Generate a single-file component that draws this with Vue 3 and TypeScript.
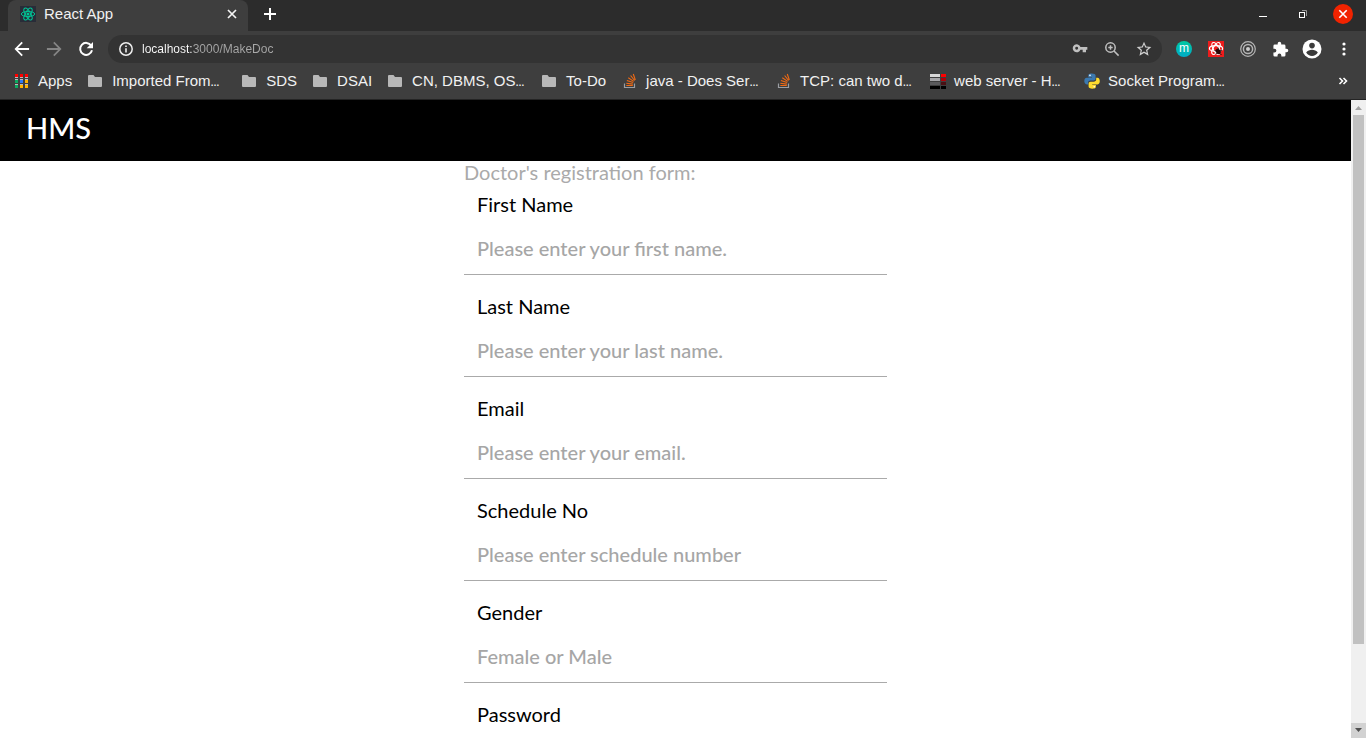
<script setup lang="ts">
import { ref } from 'vue'

interface Bookmark {
  label: string
  icon: 'apps' | 'folder' | 'stack' | 'host' | 'python'
  cut?: boolean
}

interface Field {
  id: string
  label: string
  placeholder: string
  type: string
}

const address = ref('localhost:3000/MakeDoc')

const bookmarks: Bookmark[] = [
  { label: 'Apps', icon: 'apps' },
  { label: 'Imported From', icon: 'folder', cut: true },
  { label: 'SDS', icon: 'folder' },
  { label: 'DSAI', icon: 'folder' },
  { label: 'CN, DBMS, OS', icon: 'folder', cut: true },
  { label: 'To-Do', icon: 'folder' },
  { label: 'java - Does Ser', icon: 'stack', cut: true },
  { label: 'TCP: can two d', icon: 'stack', cut: true },
  { label: 'web server - H', icon: 'host', cut: true },
  { label: 'Socket Program', icon: 'python', cut: true },
]

const appColors = ['#f00', '#f00', '#f00', '#0da960', '#2f7bf6', '#ffb300', '#0da960', '#ffb300', '#ffb300']
const hostRows = [
  ['#d8d8d8', '#f00'],
  ['#a5a5a8', '#b00008'],
  ['#5a5a5c', '#4a1014'],
  ['#000', '#000'],
]

const fields: Field[] = [
  { id: 'first-name', label: 'First Name', placeholder: 'Please enter your first name.', type: 'text' },
  { id: 'last-name', label: 'Last Name', placeholder: 'Please enter your last name.', type: 'text' },
  { id: 'email', label: 'Email', placeholder: 'Please enter your email.', type: 'email' },
  { id: 'schedule', label: 'Schedule No', placeholder: 'Please enter schedule number', type: 'text' },
  { id: 'gender', label: 'Gender', placeholder: 'Female or Male', type: 'text' },
  { id: 'password', label: 'Password', placeholder: 'Please enter your password.', type: 'password' },
]
</script>

<template>
  <div class="window">
    <div class="tabstrip">
      <div class="tab">
        <svg class="favicon" viewBox="0 0 16 16" width="16" height="16">
          <rect width="16" height="16" fill="#282c38" />
          <g fill="none" stroke="#00c596" stroke-width="1">
            <ellipse cx="8" cy="8" rx="6.7" ry="2.6" />
            <ellipse cx="8" cy="8" rx="6.7" ry="2.6" transform="rotate(60 8 8)" />
            <ellipse cx="8" cy="8" rx="6.7" ry="2.6" transform="rotate(120 8 8)" />
          </g>
          <circle cx="8" cy="8" r="1.5" fill="#00c596" />
        </svg>
        <span class="tab-title">React App</span>
        <button class="icon-btn tab-close" aria-label="Close tab">
          <svg viewBox="0 0 16 16" width="16" height="16"><path d="M4 4l8 8M12 4l-8 8" stroke="#f4f4f4" stroke-width="1.7" /></svg>
        </button>
      </div>
      <button class="icon-btn new-tab" aria-label="New tab">
        <svg viewBox="0 0 16 16" width="16" height="16"><path d="M8 2v12M2 8h12" stroke="#fff" stroke-width="2" /></svg>
      </button>
      <div class="window-controls">
        <button class="icon-btn" aria-label="Minimize">
          <svg viewBox="0 0 20 20" width="20" height="20"><path d="M6 12.5h8" stroke="#fff" /></svg>
        </button>
        <button class="icon-btn" aria-label="Restore">
          <svg viewBox="0 0 20 20" width="20" height="20" fill="none">
            <path d="M9 6.500h4.500V12" stroke="#999" />
            <rect x="6.500" y="8.500" width="5" height="5" stroke="#fff" />
          </svg>
        </button>
        <button class="icon-btn" aria-label="Close window">
          <svg viewBox="0 0 20 20" width="20" height="20">
            <circle cx="10" cy="10" r="10" fill="#f12300" />
            <path d="M6.300 6.300l7.400 7.400M13.700 6.300l-7.400 7.400" stroke="#fff" stroke-width="1.600" />
          </svg>
        </button>
      </div>
    </div>

    <div class="toolbar">
      <div class="nav">
        <button class="icon-btn" aria-label="Back">
          <svg viewBox="0 0 24 24" width="20" height="20"><path fill="#fff" d="M20.500 10.800H7.100l5.900-5.900L11.500 3.400 3 12l8.500 8.600 1.500-1.500-5.900-5.900h13.400z" /></svg>
        </button>
        <button class="icon-btn" aria-label="Forward">
          <svg viewBox="0 0 24 24" width="20" height="20"><path fill="#858585" d="M3.500 10.800h13.400L11 4.900l1.500-1.500L21 12l-8.500 8.600-1.500-1.500 5.900-5.900H3.500z" /></svg>
        </button>
        <button class="icon-btn" aria-label="Reload">
          <svg viewBox="0 0 20 20" width="20" height="20">
            <path d="M15.200 6.600A6 6 0 1 0 16 11.300" fill="none" stroke="#fff" stroke-width="2" />
            <path d="M17 2.900v6.300h-6.300z" fill="#fff" />
          </svg>
        </button>
      </div>
      <div class="omnibox">
        <svg viewBox="0 0 16 16" width="16" height="16">
          <circle cx="8" cy="8" r="6.200" fill="none" stroke="#eee" stroke-width="1.500" />
          <path d="M8 7.200v4.300M8 4.400v1.700" stroke="#eee" stroke-width="1.600" />
        </svg>
        <input v-model="address" class="address" type="text" aria-label="Address" spellcheck="false" />
        <button class="icon-btn" aria-label="Passwords">
          <svg viewBox="0 0 24 24" width="16" height="16"><path fill="#c0c0c0" d="M12.700 9A6 6 0 1 0 12.700 13H16v4h5v-4h2V9zM7 13.200a2.200 2.200 0 1 1 0-4.400 2.200 2.200 0 0 1 0 4.400z" /></svg>
        </button>
        <button class="icon-btn" aria-label="Zoom">
          <svg viewBox="0 0 16 16" width="16" height="16" fill="none" stroke="#c0c0c0" stroke-width="1.500">
            <circle cx="6.500" cy="6.500" r="4.700" />
            <path d="M10 10l4.600 4.600M4.300 6.500h4.400M6.500 4.300v4.400" />
          </svg>
        </button>
        <button class="icon-btn" aria-label="Bookmark this page">
          <svg viewBox="0 0 24 24" width="16" height="16"><path fill="#d0d0d0" d="M23 9l-7.900-.7L12 1 8.900 8.300 1 9l6 5.200L5.200 22l6.800-4.100 6.800 4.100-1.800-7.800zM12 15.600l-4.100 2.500 1.100-4.700L5.300 10.200l4.800-.4L12 5.400l1.900 4.400 4.800.4-3.700 3.200 1.100 4.700z" /></svg>
        </button>
      </div>
      <div class="extensions">
        <button class="icon-btn" aria-label="Extension m"><span class="ext-m">m</span></button>
        <button class="icon-btn" aria-label="React extension">
          <svg viewBox="0 0 16 16" width="16" height="16">
            <rect width="16" height="16" fill="#ed1c1c" />
            <g fill="none" stroke="#fff" stroke-width="1.200">
              <ellipse cx="8" cy="7.500" rx="6.600" ry="2.800" />
              <ellipse cx="8" cy="7.500" rx="6.600" ry="2.800" transform="rotate(60 8 7.500)" />
              <ellipse cx="8" cy="7.500" rx="6.600" ry="2.800" transform="rotate(120 8 7.500)" />
            </g>
            <ellipse cx="10.300" cy="10.500" rx="2.300" ry="2.900" transform="rotate(-35 10.300 10.500)" fill="#2a0808" />
            <path d="M6.500 9.500l3 1M7.500 13l2-1.500M10 6.500l.5 2M14 9l-2 1M13.500 14l-2-2" stroke="#2a0808" />
          </svg>
        </button>
        <button class="icon-btn" aria-label="Target extension">
          <svg viewBox="0 0 16 16" width="16" height="16" fill="none" stroke="#b5b5b5" stroke-width="1.200">
            <circle cx="8" cy="8" r="7.300" />
            <circle cx="8" cy="8" r="4.600" stroke-width="1.500" />
            <circle cx="8" cy="8" r="2" fill="#ccc" stroke="none" />
          </svg>
        </button>
        <button class="icon-btn" aria-label="Extensions">
          <svg viewBox="0 0 24 24" width="17" height="17"><path fill="#fff" d="M20.500 11H19V7a2 2 0 0 0-2-2h-4V3.500a2.500 2.500 0 0 0-5 0V5H4a2 2 0 0 0-2 2v3.800h1.500a2.700 2.700 0 0 1 0 5.400H2V20a2 2 0 0 0 2 2h3.800v-1.500a2.700 2.700 0 0 1 5.400 0V22H17a2 2 0 0 0 2-2v-4h1.500a2.500 2.500 0 0 0 0-5z" /></svg>
        </button>
        <button class="icon-btn" aria-label="Profile">
          <svg viewBox="0 0 20 20" width="20" height="20">
            <circle cx="10" cy="10" r="9.500" fill="#fff" />
            <circle cx="10" cy="6.600" r="2.800" fill="#3b3b3b" />
            <path d="M4.200 13.600c1.200-2 3.700-2.800 5.800-2.800s4.600.8 5.800 2.800C14.500 15.700 12.400 17 10 17s-4.500-1.300-5.800-3.400z" fill="#3b3b3b" />
          </svg>
        </button>
        <button class="icon-btn" aria-label="Menu">
          <svg viewBox="0 0 16 16" width="16" height="16" fill="#fff"><circle cx="8" cy="3" r="1.600" /><circle cx="8" cy="8" r="1.600" /><circle cx="8" cy="13" r="1.600" /></svg>
        </button>
      </div>
    </div>

    <nav class="bookmarks" aria-label="Bookmarks">
      <a v-for="mark in bookmarks" :key="mark.label" href="#" class="bookmark">
        <svg viewBox="0 0 16 16" width="16" height="16">
          <template v-if="mark.icon === 'apps'">
            <template v-for="(color, i) in appColors" :key="i">
              <rect :x="1 + (i % 3) * 5" :y="1 + Math.floor(i / 3) * 5" width="3" height="4" :fill="color" />
              <rect :x="1 + (i % 3) * 5" :y="1 + Math.floor(i / 3) * 5 + (i < 3 ? 3 : 0)" width="3" height="1" fill="#bbb" />
            </template>
          </template>
          <path v-else-if="mark.icon === 'folder'" fill="#b8b8b8" d="M1 2h4.500L7 4h6a1 1 0 0 1 1 1v8a1 1 0 0 1-1 1H1a1 1 0 0 1-1-1V3a1 1 0 0 1 1-1z" />
          <g v-else-if="mark.icon === 'stack'" fill="none">
            <path d="M2.500 10.500v4h10v-4" stroke="#9b9ea3" stroke-width="1.200" />
            <path d="M4.300 12.500h6.500M4.300 10.300l6.600.8M4.900 7.600l6.300 2M6.300 4.800l5.400 3.600M8.600 2.500l4 5M11.300 1l2 6" stroke="#f06a14" stroke-width="1.100" />
          </g>
          <template v-else-if="mark.icon === 'host'">
            <template v-for="(row, i) in hostRows" :key="i">
              <rect x="0" :y="1 + i * 4" width="10" height="3" :fill="row[0]" />
              <rect x="11" :y="1 + i * 4" width="5" height="3" :fill="row[1]" />
            </template>
          </template>
          <template v-else>
            <path fill="#3b79b0" d="M7.800.5C4.500.5 4.300 1.700 4.300 2.600v1.600H8v.6H2.700C1 4.800.3 6.400.3 8.100s.9 3.400 2.500 3.400h1.300V9.700c0-1.300 1-2.200 2.300-2.200h3.300c1.100 0 1.900-.9 1.900-2V2.600c0-1.300-1.500-2.100-3.800-2.100z" />
            <path fill="#ffdc2e" d="M8.400 15.700c3.300 0 3.500-1.200 3.500-2.100V12H8.200v-.6h5.300c1.700 0 2.300-1.600 2.300-3.300s-.8-3.400-2.400-3.400h-1.200v1.800c0 1.300-1.100 2.200-2.400 2.200H6.500c-1.100 0-1.900.9-1.900 2v2.900c0 1.300 1.500 2.100 3.800 2.100z" />
            <circle cx="6" cy="2.400" r=".8" fill="#fff" />
            <circle cx="10.200" cy="13.800" r=".8" fill="#fff" />
          </template>
        </svg>
        <span class="bookmark-label" :class="{ wide: mark.cut }">{{ mark.label }}<span v-if="mark.cut" class="dots">…</span></span>
      </a>
      <button class="icon-btn more" aria-label="More bookmarks">
        <svg viewBox="0 0 10 10" width="10" height="10" fill="none" stroke="#fff" stroke-width="1.600"><path d="M1.500 2l3 3-3 3M5.500 2l3 3-3 3" /></svg>
      </button>
    </nav>

    <div class="viewport">
      <div class="page">
        <header class="site-header">
          <a href="#" class="brand">HMS</a>
        </header>
        <form class="form" @submit.prevent>
          <h1 class="form-title">Doctor's registration form:</h1>
          <div v-for="field in fields" :key="field.id" class="field">
            <label :for="field.id">{{ field.label }}</label>
            <input :id="field.id" :type="field.type" :placeholder="field.placeholder" />
          </div>
        </form>
      </div>
      <div class="scrollbar">
        <div class="arrow">
          <svg viewBox="0 0 15 15" width="15" height="15"><path d="M4 10l3.500-4 3.500 4z" fill="#a3a3a3" /></svg>
        </div>
        <div class="track"><div class="thumb"></div></div>
        <div class="arrow active">
          <svg viewBox="0 0 15 15" width="15" height="15"><path d="M4 5h7L7.500 9z" fill="#505050" /></svg>
        </div>
      </div>
    </div>
  </div>
</template>

<style>
body {
  overflow: hidden;
}
</style>

<style scoped>
.window {
  display: flex;
  flex-direction: column;
  height: 100vh;
  overflow: hidden;
  background: #fff;
  font-family: "Liberation Sans", Arial, sans-serif;
  font-size: 15px;
  color: #f1f1f1;
}

.window * {
  box-sizing: border-box;
}

svg {
  display: block;
  flex: none;
}

.icon-btn {
  display: flex;
  align-items: center;
  justify-content: center;
  flex: none;
  padding: 0;
  border: 0;
  background: none;
  color: inherit;
}

.tabstrip {
  display: flex;
  flex: none;
  height: 31px;
  padding: 0 13px 0 8px;
  background: #2c2c2c;
}

.tab {
  display: flex;
  align-items: center;
  gap: 8px;
  width: 240px;
  height: 31px;
  padding: 0 8px 3px 12px;
  border-radius: 8px 8px 0 0;
  background: #3e3e3e;
}

.tab-title {
  flex: 1;
  padding-bottom: 2px;
}

.new-tab {
  width: 44px;
  height: 28px;
}

.window-controls {
  display: flex;
  align-items: center;
  gap: 20px;
  height: 28px;
  margin-left: auto;
}

.toolbar {
  display: flex;
  align-items: center;
  flex: none;
  height: 36px;
  padding: 0 6px 0 12px;
  background: #3e3e3e;
}

.nav {
  display: flex;
  gap: 12px;
}

.omnibox {
  display: flex;
  align-items: center;
  flex: 1;
  gap: 16px;
  height: 28px;
  margin: 0 6px 0 12px;
  padding: 0 10px;
  border-radius: 14px;
  background: #333;
}

.address {
  flex: 1;
  min-width: 0;
  margin-left: -8px;
  padding: 0;
  border: 0;
  outline: 0;
  background: linear-gradient(90deg, #fff 51px, #a8a8a8 51px);
  background-clip: text;
  -webkit-background-clip: text;
  color: transparent;
  font: 12px "Liberation Sans", Arial, sans-serif;
}

.extensions {
  display: flex;
  align-items: center;
}

.extensions .icon-btn {
  width: 32px;
}

.ext-m {
  width: 16px;
  height: 16px;
  border-radius: 50%;
  background: linear-gradient(#00c8a0, #00acc8);
  color: #fff;
  font: 12px/14px "Liberation Sans", Arial, sans-serif;
}

.bookmarks {
  display: flex;
  align-items: center;
  flex: none;
  gap: 16px;
  height: 33px;
  padding: 0 18px 4px 14px;
  border-bottom: 1px solid #242424;
  background: #3e3e3e;
}

.bookmark {
  display: flex;
  align-items: center;
  gap: 8px;
  color: inherit;
  text-decoration: none;
  white-space: nowrap;
}

.bookmark-label {
  padding-bottom: 2px;
}

.bookmark-label.wide {
  width: 114px;
}

.dots {
  font-size: 9px;
  font-weight: 700;
}

.more {
  margin-left: auto;
}

.viewport {
  display: flex;
  flex: 1;
  min-height: 0;
}

.page {
  flex: 1;
  overflow: hidden;
  font-family: Lato, sans-serif;
  color: #000;
}

.site-header {
  display: flex;
  align-items: center;
  height: 61px;
  padding: 0 26px 6px;
  background: #000;
}

.brand {
  color: #fff;
  font-size: 29px;
  font-weight: 500;
  text-decoration: none;
}

.form {
  width: 423px;
  max-width: 100%;
  margin: 0 auto;
}

.form-title {
  margin: 0;
  color: #aaa;
  font-size: 20px;
  font-weight: 400;
  line-height: 22px;
}

.field {
  display: flex;
  flex-direction: column;
  height: 102px;
  padding-top: 9px;
}

.field label {
  padding-left: 13px;
  font-size: 20px;
  line-height: 24px;
}

.field input {
  height: 59px;
  padding: 6px 13px 0;
  border: 0;
  border-bottom: 1px solid #aaa;
  border-radius: 0;
  outline: 0;
  background: none;
  font: 500 20px Lato, sans-serif;
}

.field input::placeholder {
  color: #a6a6a6;
  opacity: 1;
}

.scrollbar {
  display: flex;
  flex-direction: column;
  width: 15px;
  background: #f0f0f0;
}

.track {
  flex: 1;
  padding: 0 2px;
}

.thumb {
  height: 87%;
  background: #c1c1c1;
}

.arrow.active {
  background: #d2d2d2;
}
</style>
